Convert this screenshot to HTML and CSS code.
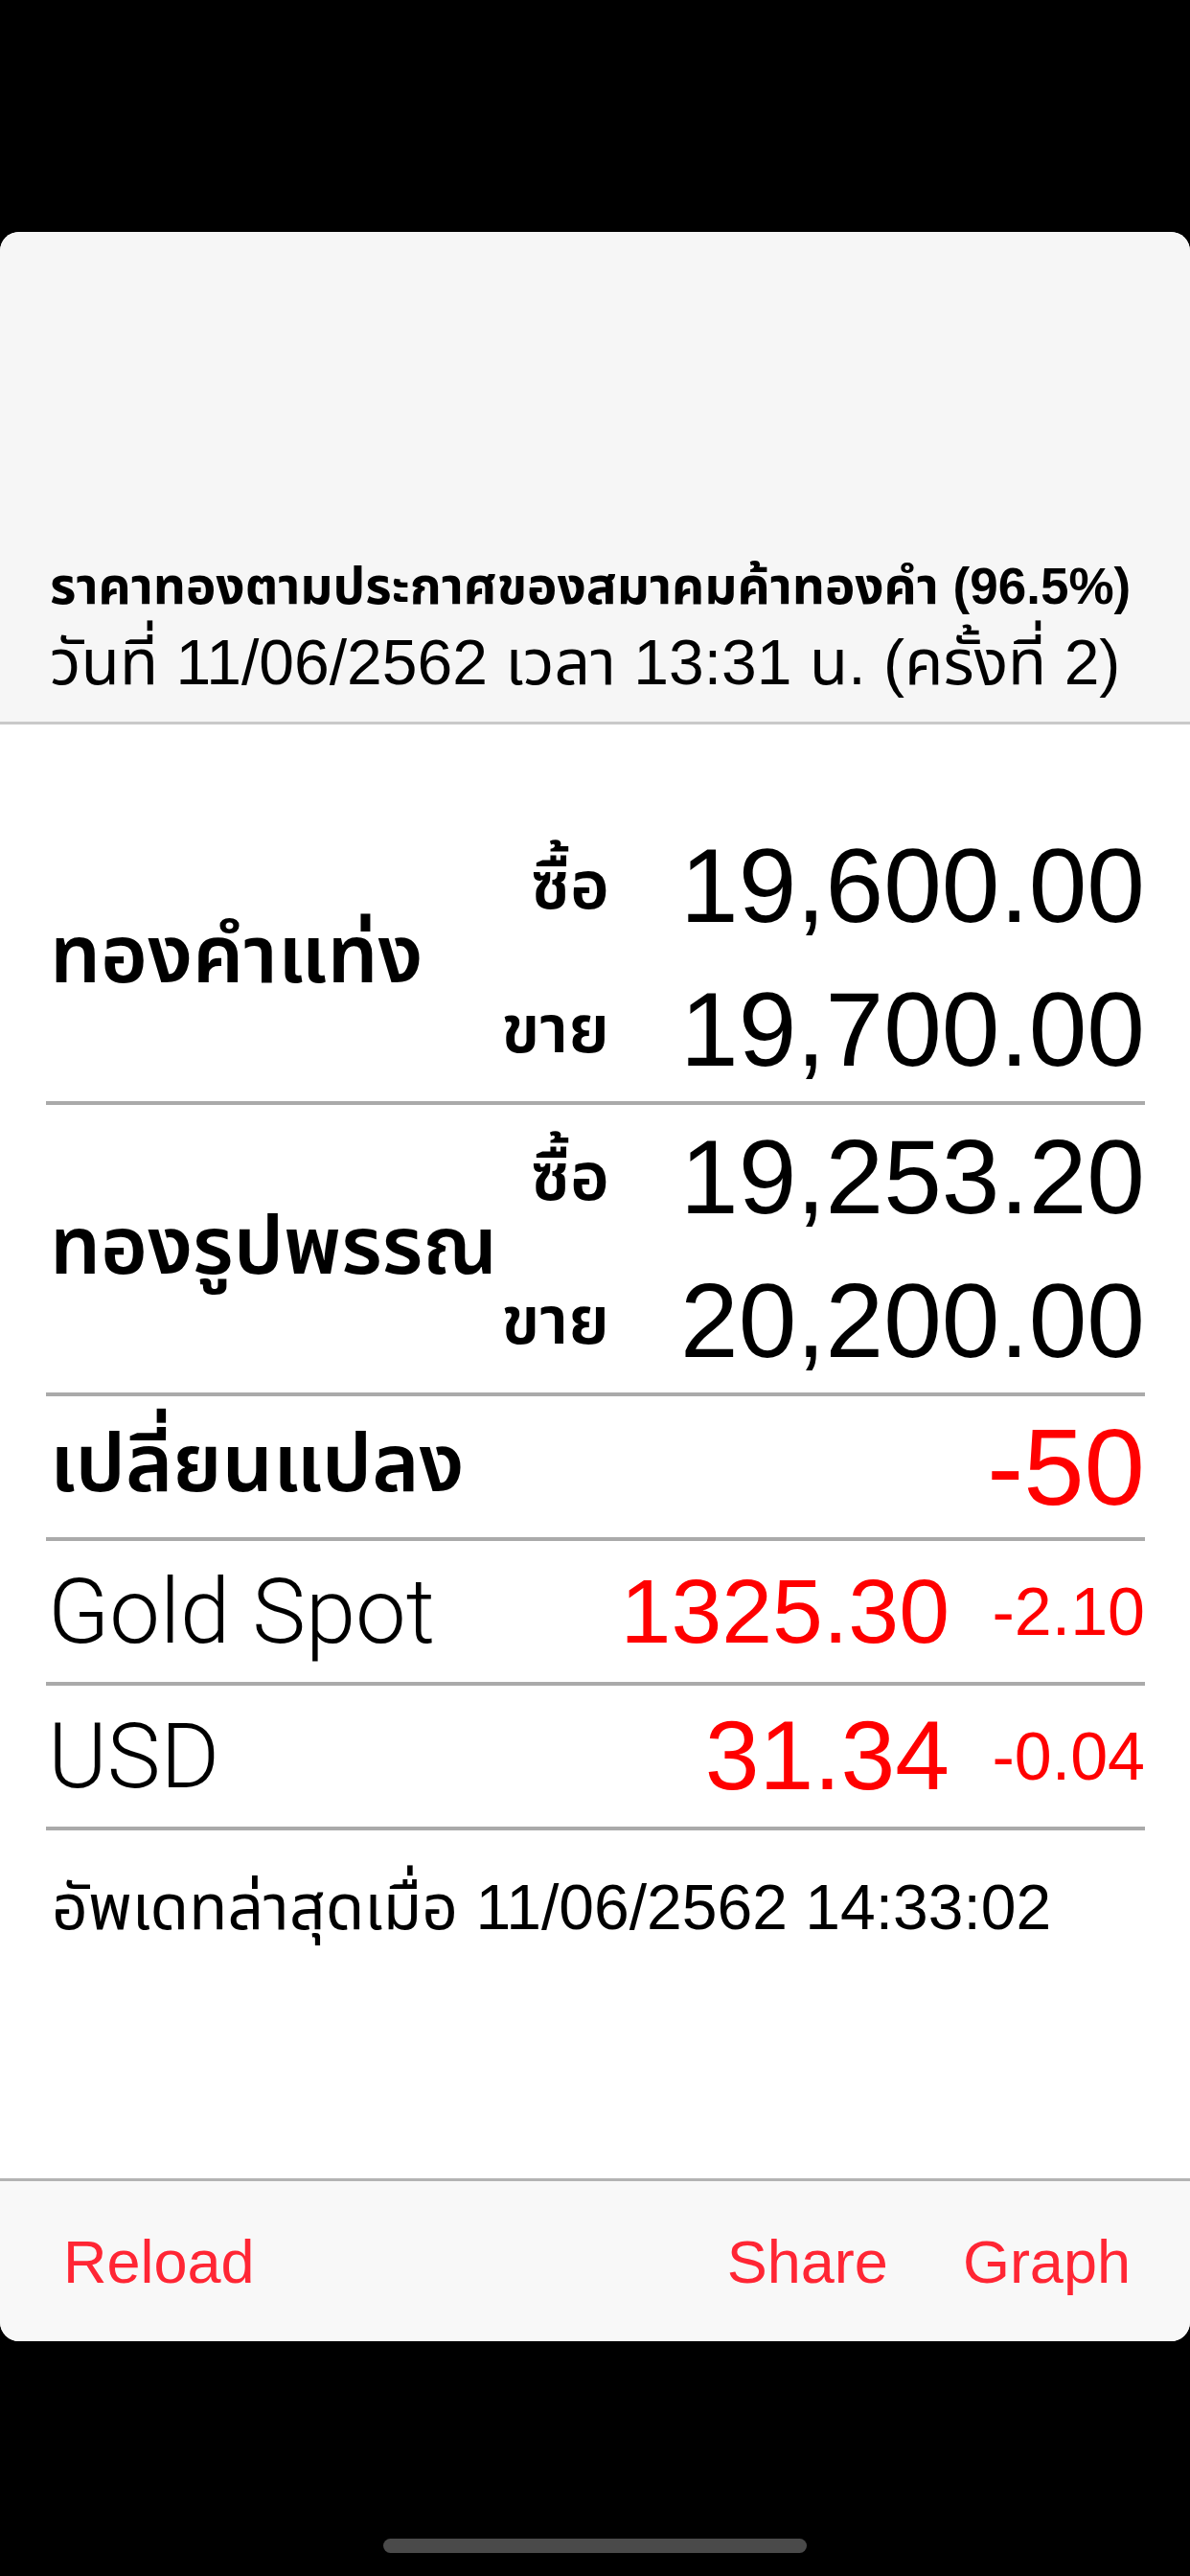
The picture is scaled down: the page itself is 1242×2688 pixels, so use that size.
FILE: index.html
```html
<!DOCTYPE html>
<html lang="th">
<head>
<meta charset="utf-8">
<title>ราคาทอง</title>
<link rel="stylesheet" href="styles.css">
</head>
<body>
<div class="screen">
  <div class="top-gap"></div>
  <div class="card">
    <header class="header">
      <div class="title">ราคาทองตามประกาศของสมาคมค้าทองคำ (96.5%)</div>
      <div class="date">วันที่ 11/06/2562 เวลา 13:31 น. (ครั้งที่ 2)</div>
    </header>
    <main class="content">
      <section class="price-block">
        <div class="kind">ทองคำแท่ง</div>
        <div class="side">ซื้อ</div>
        <div class="price">19,600.00</div>
        <div class="side">ขาย</div>
        <div class="price">19,700.00</div>
      </section>
      <section class="price-block">
        <div class="kind">ทองรูปพรรณ</div>
        <div class="side">ซื้อ</div>
        <div class="price">19,253.20</div>
        <div class="side">ขาย</div>
        <div class="price">20,200.00</div>
      </section>
      <section class="row">
        <div class="kind">เปลี่ยนแปลง</div>
        <div class="change-big">-50</div>
      </section>
      <section class="row">
        <div class="market">Gold Spot</div>
        <div class="market-value spot">1325.30</div>
        <div class="market-change">-2.10</div>
      </section>
      <section class="row">
        <div class="market">USD</div>
        <div class="market-value usd">31.34</div>
        <div class="market-change">-0.04</div>
      </section>
      <div class="updated">อัพเดทล่าสุดเมื่อ 11/06/2562 14:33:02</div>
    </main>
    <footer class="toolbar">
      <span class="tool">Reload</span>
      <span class="tool-spacer"></span>
      <span class="tool">Share</span>
      <span class="tool">Graph</span>
    </footer>
  </div>
  <div class="home-area"><div class="home-indicator"></div></div>
</div>
</body>
</html>
```
FILE: styles.css
```css
* { box-sizing: border-box; }
html, body { margin: 0; padding: 0; }
body {
  background: #000;
  width: 1242px;
  height: 2688px;
  overflow: hidden;
  font-family: "Liberation Sans", "Thonburi", "Noto Sans Thai", "Noto Sans Thai Looped", "Loma", "Garuda", sans-serif;
  color: #000;
}
.screen {
  display: flex;
  flex-direction: column;
  height: 2688px;
}
.top-gap { height: 242px; flex: none; }
.card {
  height: 2201px;
  flex: none;
  background: #fff;
  border-radius: 20px;
  overflow: hidden;
  display: flex;
  flex-direction: column;
}
.header {
  height: 514px;
  flex: none;
  background: #f6f6f6;
  border-bottom: 3px solid #c9c9c9;
  display: flex;
  flex-direction: column;
  justify-content: flex-end;
  padding: 0 30px 20px 52px;
}
.title {
  font-size: 53px;
  font-weight: bold;
  line-height: 74px;
  white-space: nowrap;
}
.date {
  font-size: 66px;
  line-height: 84px;
  white-space: nowrap;
}
.content {
  flex: 1;
  padding: 93px 47px 0 48px;
}
.price-block {
  display: grid;
  grid-template-columns: 1fr auto 559px;
  grid-template-rows: 150px 150px;
  align-items: center;
  border-bottom: 4px solid #aaa;
}
.price-block .kind {
  grid-row: 1 / span 2;
  grid-column: 1;
}
.kind {
  font-size: 84px;
  font-weight: 600;
  white-space: nowrap;
  padding-left: 4px;
}
.side {
  grid-column: 2;
  font-size: 70px;
  font-weight: 600;
  text-align: right;
  line-height: 150px;
}
.price {
  grid-column: 3;
  font-size: 109px;
  text-align: right;
  line-height: 150px;
}
.row {
  height: 151px;
  display: flex;
  align-items: center;
  border-bottom: 4px solid #aaa;
}
.row .kind { flex: 1; }
.change-big {
  font-size: 114px;
  color: #ff0000;
}
.market {
  flex: 1;
  font-family: Roboto, "Liberation Sans", sans-serif;
  font-weight: 300;
  font-size: 94px;
  padding-left: 2px;
}
.market-value {
  color: #ff0000;
  text-align: right;
}
.market-value.spot { font-size: 95px; }
.market-value.usd { font-size: 102px; }
.market-change {
  width: 204px;
  font-size: 70px;
  color: #ff0000;
  text-align: right;
}
.updated {
  font-size: 66px;
  line-height: 80px;
  padding: 40px 0 0 6px;
  white-space: nowrap;
}
.toolbar {
  height: 170px;
  flex: none;
  background: #f8f8f8;
  border-top: 3px solid #b3b3b3;
  display: flex;
  align-items: center;
  gap: 78px;
  padding: 0 62px 0 66px;
}
.tool {
  font-size: 63px;
  color: #ff2634;
}
.tool-spacer { flex: 1; }
.home-area {
  flex: 1;
  display: flex;
  justify-content: center;
  align-items: flex-end;
  padding-bottom: 24px;
}
.home-indicator {
  width: 442px;
  height: 15px;
  border-radius: 8px;
  background: #4a4a4a;
}
```
